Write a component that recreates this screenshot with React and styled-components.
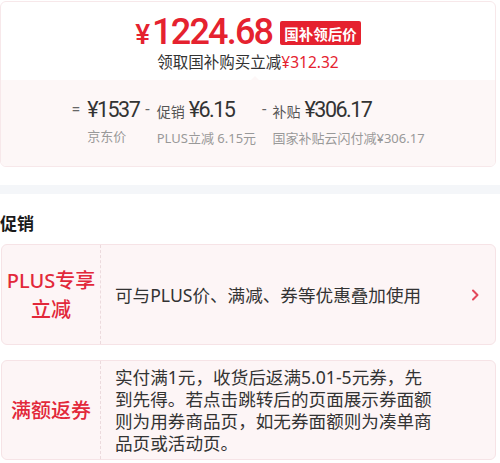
import React from "react";
import styled, { createGlobalStyle } from "styled-components";

const GlobalStyle = createGlobalStyle`
  body {
    margin: 0;
    background: #fff;
    font-family: "Noto Sans", "Noto Sans CJK SC", sans-serif;
    color: #333;
  }
`;

const red = "#e5222f";

const Page = styled.div`
  width: 500px;
  padding-top: 1px;
`;

const PriceCard = styled.div`
  margin-right: 4px;
  border: 1px solid #f7e8ea;
  border-radius: 6px;
  overflow: hidden;
`;

const PriceHead = styled.div`
  position: relative;
  padding: 11px 0 9px;
  display: flex;
  flex-direction: column;
  align-items: center;
  &::after {
    content: "";
    position: absolute;
    left: 250px;
    bottom: 0;
    border: 4px solid transparent;
    border-bottom: 4px solid #fdf7f7;
  }
`;

const PriceLine = styled.div`
  display: flex;
  align-items: baseline;
  height: 40px;
  color: ${red};
  font-family: Roboto, "Noto Sans", sans-serif;
  font-weight: 500;
`;

const Yen = styled.span`
  font-size: 28px;
  line-height: 28px;
  margin-right: 2px;
`;

const Big = styled.span`
  font-size: 36px;
  letter-spacing: -1.8px;
  line-height: 38px;
`;

const Badge = styled.span`
  margin-left: 8px;
  align-self: center;
  height: 24px;
  padding: 0 4px;
  display: flex;
  align-items: center;
  background: ${red};
  color: #fff;
  border-radius: 2px;
  font-family: "Noto Sans CJK SC", sans-serif;
  font-size: 14.5px;
  font-weight: 700;
`;

const Saving = styled.div`
  font-size: 15.5px;
  line-height: 18px;
  color: #333;
  span {
    color: ${red};
  }
`;

const Breakdown = styled.div`
  background: #fdf7f7;
  padding: 17px 0 19px;
  display: flex;
  justify-content: center;
  gap: 6px;
`;

const Part = styled.div`
  display: flex;
  align-items: flex-start;
`;

const Sign = styled.span`
  font-family: Roboto, sans-serif;
  font-size: 16px;
  line-height: 26px;
  color: #666;
  margin-right: ${(p) => p.$gap}px;
`;

const Stack = styled.div`
  display: flex;
  flex-direction: column;
  gap: 4px;
`;

const Figure = styled.div`
  display: flex;
  align-items: baseline;
  line-height: 26px;
  small {
    font-size: 14px;
    color: #555;
    margin-right: 4px;
  }
  b {
    font-family: Roboto, sans-serif;
    font-weight: 400;
    font-size: 21.5px;
    letter-spacing: -1.5px;
    color: #333;
  }
`;

const Note = styled.div`
  font-size: 13px;
  line-height: 18px;
  color: #999;
  white-space: nowrap;
`;

const Band = styled.div`
  margin-top: 18px;
  height: 9px;
  background: #f4f6f9;
`;

const Heading = styled.h3`
  margin: 0;
  padding-top: 18px;
  font-size: 17px;
  line-height: 24px;
  font-weight: 700;
  color: #1a1a1a;
`;

const PromoList = styled.div`
  margin: 8px 4px 0 1px;
  display: flex;
  flex-direction: column;
  gap: 15px;
`;

const Promo = styled.div`
  box-sizing: border-box;
  min-height: ${(p) => p.$minHeight}px;
  display: flex;
  background: #fdf5f6;
  border: 1px solid #f6e3e6;
  border-radius: 6px;
`;

const Tag = styled.div`
  width: 98px;
  flex: none;
  display: flex;
  align-items: center;
  justify-content: center;
  text-align: center;
  color: #e2283a;
  font-size: 20px;
  line-height: 29px;
  font-weight: 500;
  border-right: 1px dashed #ecdadd;
`;

const Body = styled.div`
  flex: 1;
  display: flex;
  align-items: center;
  padding: 5px 15px 5px 14px;
`;

const Text = styled.div`
  width: 320px;
  font-size: 17.6px;
  line-height: 22px;
  color: #333;
`;

const Chevron = styled.svg`
  margin-left: auto;
  flex: none;
`;

const parts = [
  { sign: "=", gap: 7, label: "", amount: "¥1537", note: "京东价" },
  { sign: "-", gap: 7, label: "促销", amount: "¥6.15", note: "PLUS立减 6.15元" },
  { sign: "-", gap: 6, label: "补贴", amount: "¥306.17", note: "国家补贴云闪付减¥306.17" },
];

const promos = [
  {
    tag: ["PLUS专享", "立减"],
    text: "可与PLUS价、满减、券等优惠叠加使用",
    arrow: true,
    minHeight: 101,
  },
  {
    tag: ["满额返券"],
    text: "实付满1元，收货后返满5.01-5元券，先到先得。若点击跳转后的页面展示券面额则为用券商品页，如无券面额则为凑单商品页或活动页。",
    arrow: false,
    minHeight: 100,
  },
];

export default function App() {
  return (
    <Page>
      <GlobalStyle />
      <PriceCard>
        <PriceHead>
          <PriceLine>
            <Yen>¥</Yen>
            <Big>1224.68</Big>
            <Badge>国补领后价</Badge>
          </PriceLine>
          <Saving>
            领取国补购买立减<span>¥312.32</span>
          </Saving>
        </PriceHead>
        <Breakdown>
          {parts.map((p) => (
            <Part key={p.note}>
              <Sign $gap={p.gap}>{p.sign}</Sign>
              <Stack>
                <Figure>
                  {p.label && <small>{p.label}</small>}
                  <b>{p.amount}</b>
                </Figure>
                <Note>{p.note}</Note>
              </Stack>
            </Part>
          ))}
        </Breakdown>
      </PriceCard>
      <Band />
      <Heading>促销</Heading>
      <PromoList>
        {promos.map((p) => (
          <Promo key={p.text} $minHeight={p.minHeight}>
            <Tag>
              <div>
                {p.tag.map((line) => (
                  <div key={line}>{line}</div>
                ))}
              </div>
            </Tag>
            <Body>
              <Text>{p.text}</Text>
              {p.arrow && (
                <Chevron width="9" height="12" viewBox="0 0 9 12">
                  <path
                    d="M2 1.5 L6.5 6 L2 10.5"
                    fill="none"
                    stroke="#e3485a"
                    strokeWidth="2"
                    strokeLinecap="round"
                    strokeLinejoin="round"
                  />
                </Chevron>
              )}
            </Body>
          </Promo>
        ))}
      </PromoList>
    </Page>
  );
}
